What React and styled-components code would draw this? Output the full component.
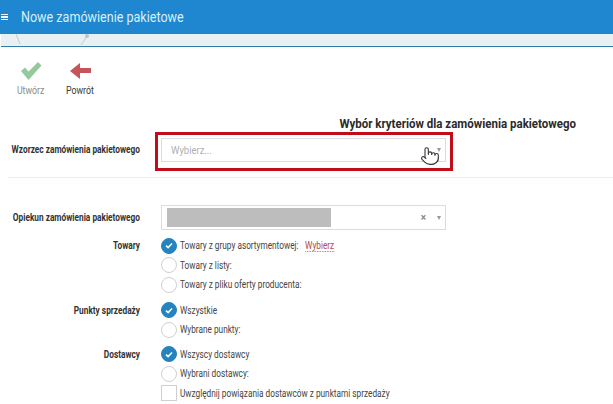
import React from 'react';
import styled, { createGlobalStyle } from 'styled-components';
import { Pointer } from 'lucide-react';

const GlobalStyle = createGlobalStyle`
    html, body { margin: 0; padding: 0; background: #fff; }
    body { font-family: Roboto, "Liberation Sans", sans-serif; color: #333; }
`;

const Page = styled.div`
    width: 613px;
    height: 404px;
    overflow: hidden;
    background: #fff;
`;

const Header = styled.header`
    height: 34px;
    background: #1f87cf;
    display: flex;
    align-items: center;
    padding-left: 1px;
    color: #d8effa;
`;

const Burger = styled.span`
    width: 7px;
    height: 4px;
    margin-right: 13px;
    border-top: 1.5px solid #f2fafe;
    border-bottom: 1.5px solid #f2fafe;
    position: relative;
    &::after {
        content: '';
        position: absolute;
        left: 0;
        right: 0;
        top: 1px;
        height: 1.5px;
        background: #f2fafe;
    }
`;

const HeaderTitle = styled.h1`
    margin: 0 0 1px;
    font-size: 15.5px;
    font-weight: 400;
    white-space: nowrap;
    transform: scaleX(0.81);
    transform-origin: left center;
`;

const Strip = styled.div`
    height: 12px;
    background: #e9f0f3;
    border-bottom: 1px solid #2f7ea8;
    margin-left: 1px;
    svg { display: block; }
`;

const Toolbar = styled.div`
    display: flex;
    gap: 21px;
    padding: 15px 0 0 17px;
`;

const ToolButton = styled.div`
    width: 28px;
    display: flex;
    flex-direction: column;
    align-items: center;
    gap: 5px;
    font-size: 10px;
    white-space: nowrap;
    color: ${(p) => (p.$muted ? '#8a8a8a' : '#3a3a3a')};
    svg { display: block; flex: none; }
`;

const ToolLabel = styled.span`
    transform: scaleX(0.88);
`;

const Heading = styled.h2`
    margin: 21px 37px 0 0;
    height: 14px;
    line-height: 14px;
    text-align: right;
    font-size: 13px;
    font-weight: 700;
    color: #2b2b2b;
    white-space: nowrap;
    transform: scaleX(0.885);
    transform-origin: right center;
`;

const Row = styled.div`
    display: grid;
    grid-template-columns: 140px 1fr;
    column-gap: 21px;
    margin-top: ${(p) => p.$top || 0}px;
`;

const Label = styled.div`
    display: flex;
    justify-content: flex-end;
    font-size: 10px;
    font-weight: 700;
    color: #333;
    white-space: nowrap;
    line-height: ${(p) => p.$line || 16}px;
    transform: scaleX(0.83);
    transform-origin: right center;
`;

const SelectBox = styled.div`
    width: 285px;
    height: ${(p) => p.$h}px;
    box-sizing: border-box;
    border: 1px solid #dcdcdc;
    display: flex;
    align-items: center;
    padding: 0 4px 0 ${(p) => p.$pad || 9}px;
    position: relative;
`;

const Placeholder = styled.span`
    flex: 1;
    font-size: 10.5px;
    color: #b0b0b0;
    transform: scaleX(0.9);
    transform-origin: left center;
`;

const Masked = styled.span`
    width: 164px;
    height: 19px;
    background: #bdbdbd;
`;

const ClearMark = styled.span`
    margin-left: auto;
    margin-right: 11px;
    font-size: 10px;
    font-weight: 700;
    color: #888;
`;

const Caret = styled.span`
    width: 0;
    height: 0;
    border-left: 2.5px solid transparent;
    border-right: 2.5px solid transparent;
    border-top: 4px solid #999;
`;

const Highlight = styled.div`
    position: relative;
    margin-left: -6px;
    width: 298px;
    height: 39px;
    box-sizing: border-box;
    border: 3px solid #c00d1a;
    padding: 3px;
`;

const HandCursor = styled(Pointer)`
    position: absolute;
    left: 262px;
    top: 11px;
    color: #333;
    fill: #fff;
`;

const Divider = styled.hr`
    margin: 6px 0 0 8px;
    border: 0;
    border-top: 1px solid #ececec;
`;

const Options = styled.div`
    display: flex;
    flex-direction: column;
`;

const Option = styled.div`
    height: 19.5px;
    display: flex;
    align-items: center;
    gap: 3px;
    font-size: 10px;
    color: #444;
`;

const OptionText = styled.span`
    white-space: nowrap;
    transform: scaleX(0.825);
    transform-origin: left center;
`;

const Radio = styled.span`
    width: 16px;
    height: 16px;
    box-sizing: border-box;
    flex: none;
    border-radius: 50%;
    border: 1px solid ${(p) => (p.$on ? '#2583bd' : '#d0d0d0')};
    background: ${(p) => (p.$on ? '#2583bd' : '#fff')};
    display: flex;
    align-items: center;
    justify-content: center;
`;

const Checkbox = styled.span`
    width: 16px;
    height: 16px;
    box-sizing: border-box;
    flex: none;
    border: 1px solid #cfcfcf;
`;

const PickLink = styled.span`
    display: inline-block;
    margin-left: 8px;
    color: #b5474c;
    border-bottom: 1px dotted #777;
    line-height: 11px;
`;

const Tick = () => (
    <svg width="8" height="7" viewBox="0 0 8 7">
        <path d="M1 3.6 L3.1 5.6 L7 1.4" fill="none" stroke="#fff" strokeWidth="1.5" />
    </svg>
);

const RadioOption = ({ on, children }) => (
    <Option>
        <Radio $on={on}>{on && <Tick />}</Radio>
        <OptionText>{children}</OptionText>
    </Option>
);

const App = () => (
    <Page>
        <GlobalStyle />
        <Header>
            <Burger />
            <HeaderTitle>Nowe zamówienie pakietowe</HeaderTitle>
        </Header>
        <Strip>
            <svg width="120" height="12" viewBox="0 0 120 12">
                <path d="M15 0 L19 10 M80 11 L86 2" stroke="#c4cbd0" strokeWidth="1" fill="none" />
                <circle cx="86" cy="2" r="2" fill="#bcc4ca" />
            </svg>
        </Strip>
        <Toolbar>
            <ToolButton $muted>
                <svg width="22" height="18" viewBox="0 0 22 18">
                    <path d="M1 9 L5 5.5 L8.5 9.5 L18 0 L21.5 3.5 L8.5 18 Z" fill="#95c99d" />
                </svg>
                <ToolLabel>Utwórz</ToolLabel>
            </ToolButton>
            <ToolButton>
                <svg width="21" height="18" viewBox="0 0 21 18">
                    <path d="M0 9 L10 1 L10 6 L21 6 L21 11 L10 11 L10 17 Z" fill="#c5555b" />
                </svg>
                <ToolLabel>Powrót</ToolLabel>
            </ToolButton>
        </Toolbar>
        <Heading>Wybór kryteriów dla zamówienia pakietowego</Heading>
        <Row $top={1}>
            <Label $line={36}>Wzorzec zamówienia pakietowego</Label>
            <Highlight>
                <SelectBox $h={24} $pad={9}>
                    <Placeholder>Wybierz...</Placeholder>
                    <Caret />
                </SelectBox>
                <HandCursor size={20} strokeWidth={1.3} />
            </Highlight>
        </Row>
        <Divider />
        <Row $top={27}>
            <Label $line={25}>Opiekun zamówienia pakietowego</Label>
            <SelectBox $h={25} $pad={5}>
                <Masked />
                <ClearMark>×</ClearMark>
                <Caret />
            </SelectBox>
        </Row>
        <Row $top={6}>
            <Label $line={19}>Towary</Label>
            <Options>
                <RadioOption on>
                    Towary z grupy asortymentowej:
                    <PickLink>Wybierz</PickLink>
                </RadioOption>
                <RadioOption>Towary z listy:</RadioOption>
                <RadioOption>Towary z pliku oferty producenta:</RadioOption>
            </Options>
        </Row>
        <Row $top={6}>
            <Label $line={19}>Punkty sprzedaży</Label>
            <Options>
                <RadioOption on>Wszystkie</RadioOption>
                <RadioOption>Wybrane punkty:</RadioOption>
            </Options>
        </Row>
        <Row $top={5}>
            <Label $line={19}>Dostawcy</Label>
            <Options>
                <RadioOption on>Wszyscy dostawcy</RadioOption>
                <RadioOption>Wybrani dostawcy:</RadioOption>
                <Option>
                    <Checkbox />
                    <OptionText>Uwzględnij powiązania dostawców z punktami sprzedaży</OptionText>
                </Option>
            </Options>
        </Row>
    </Page>
);

export default App;
